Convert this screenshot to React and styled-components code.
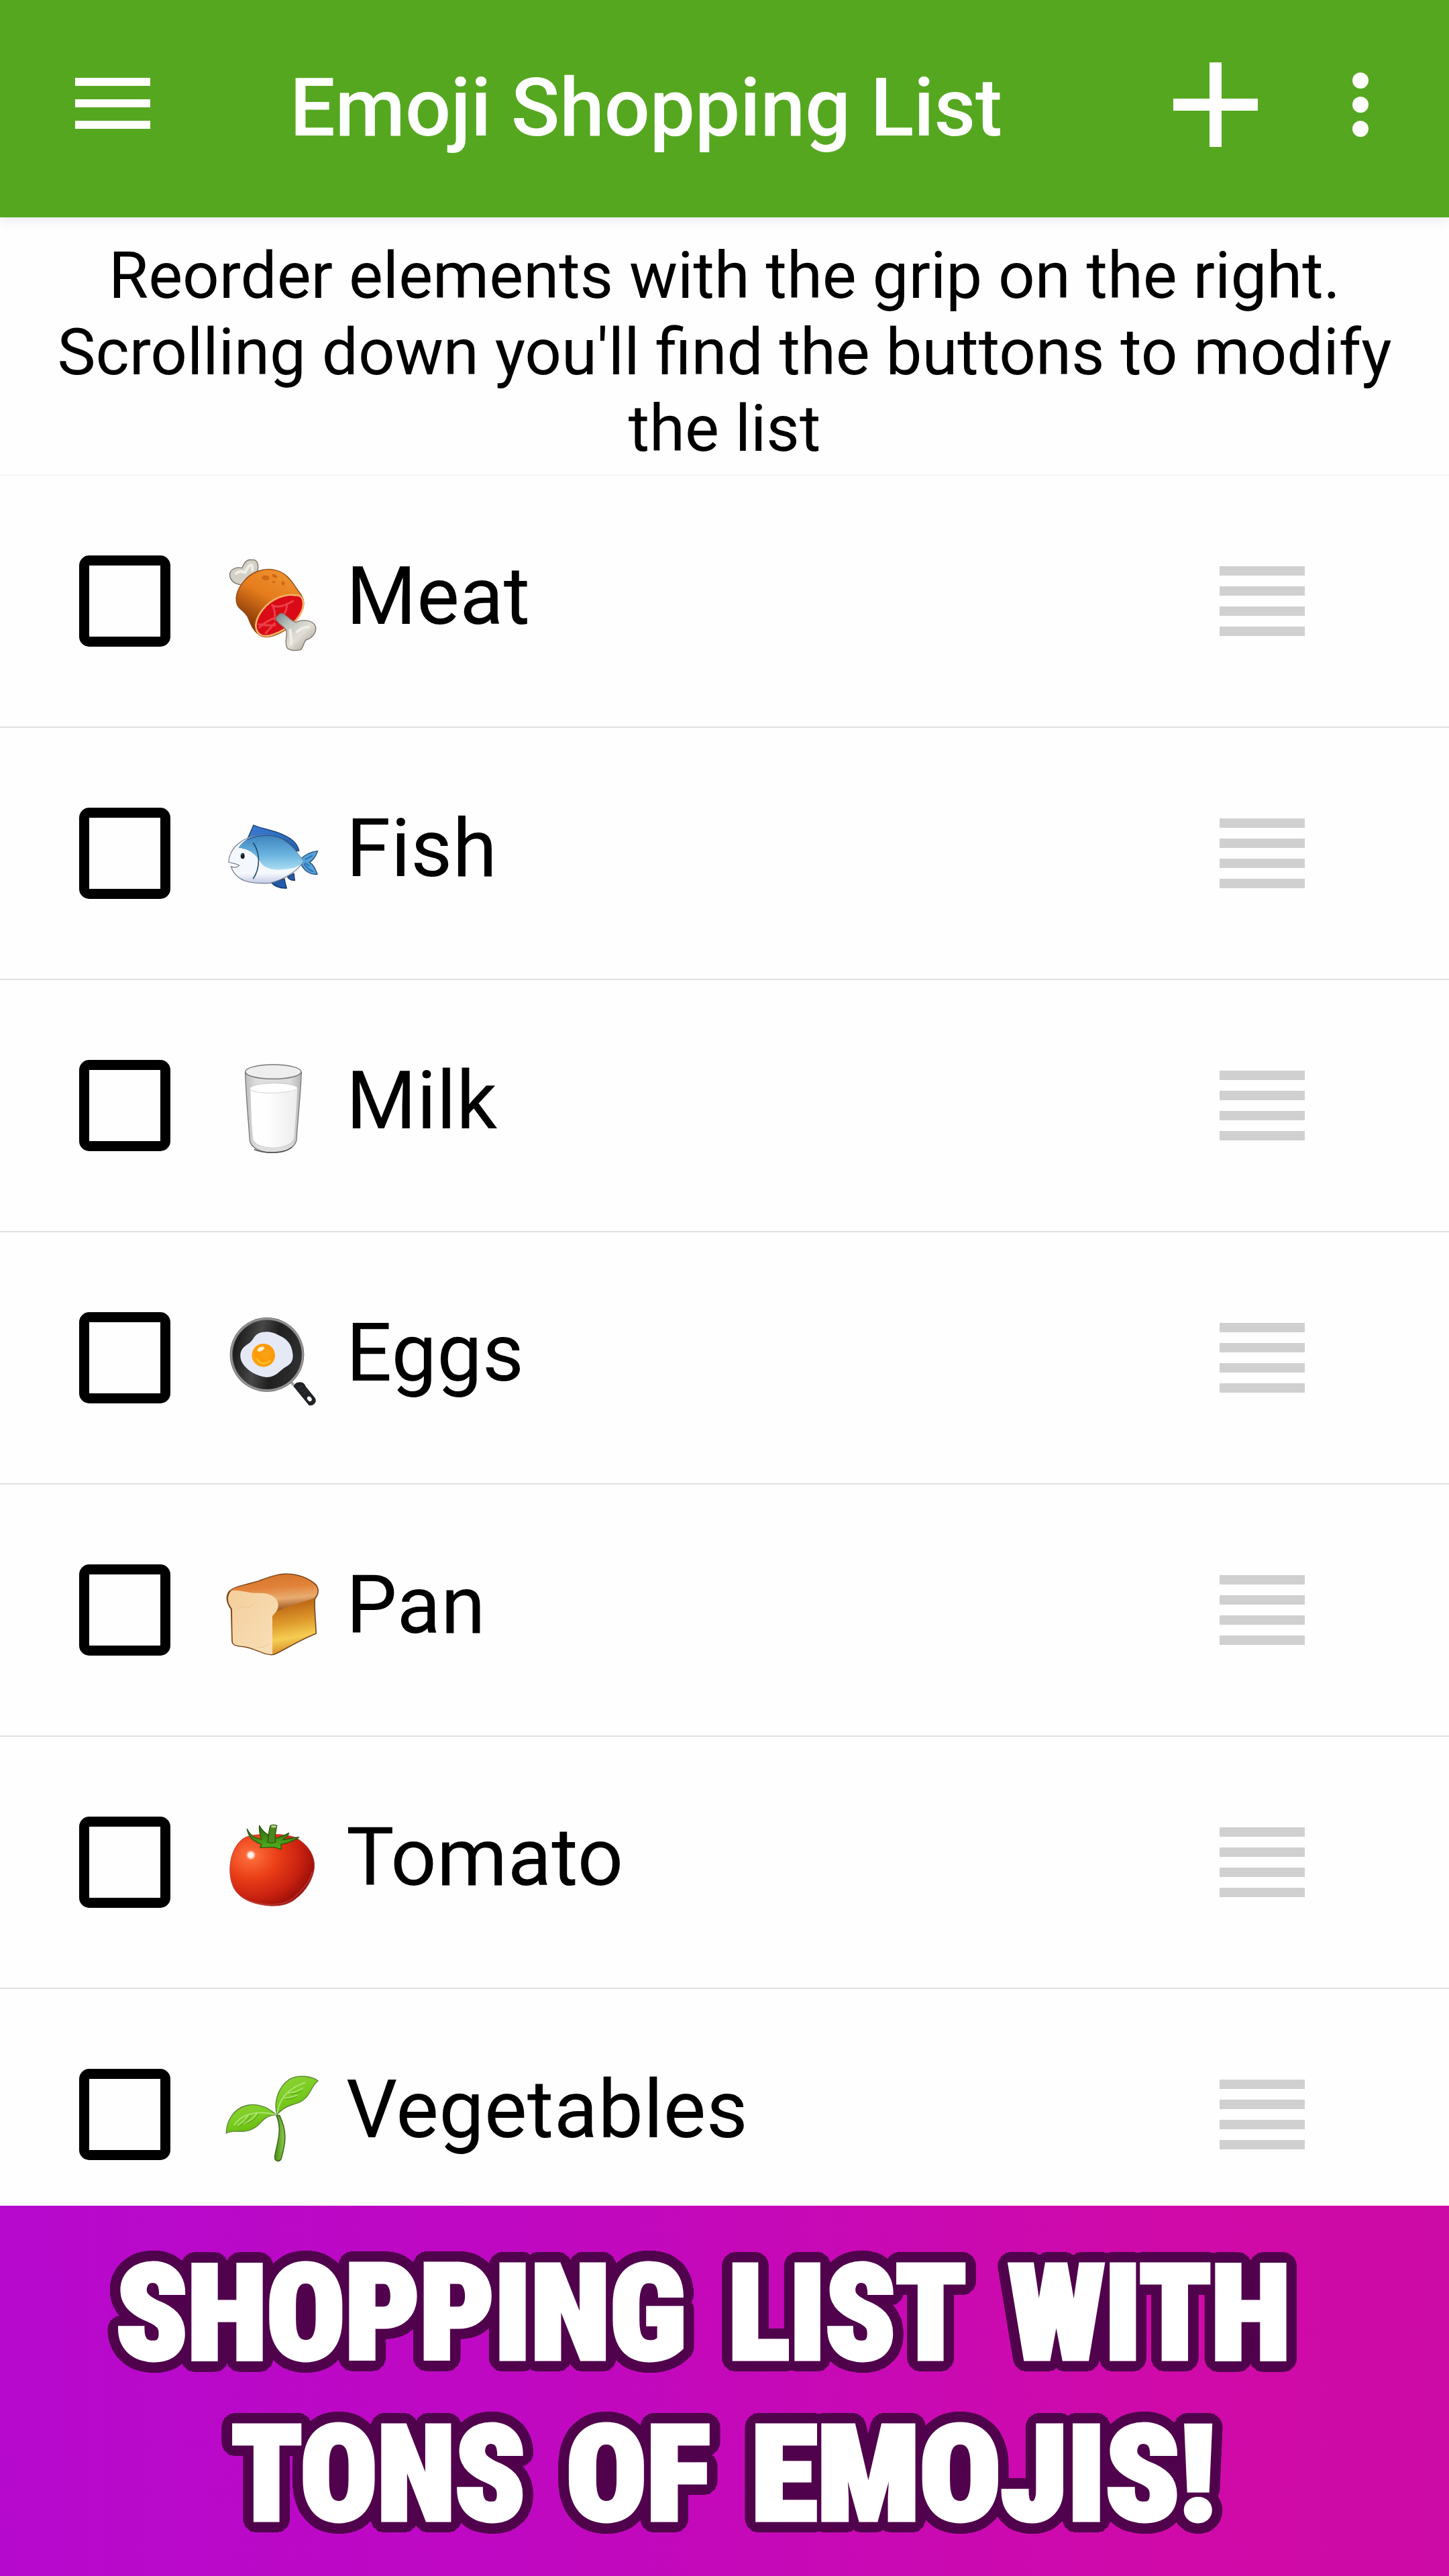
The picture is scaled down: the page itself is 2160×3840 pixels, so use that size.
import React, { useLayoutEffect, useRef, useState } from 'react'
import styled, { createGlobalStyle } from 'styled-components'

const color = {
  green: '#55a720',
  white: '#fefefe',
  black: '#000',
  divider: '#e0e0e0',
  grip: '#d0d0d0',
  outline: '#50034c'
}

const Meat = () => (
  <Emoji viewBox='0 0 540 540'>
    <defs>
      <linearGradient id='meatSkin' x1='0.7' y1='0' x2='0.2' y2='0.9'>
        <stop offset='0' stopColor='#ee922f' />
        <stop offset='.45' stopColor='#e57c1c' />
        <stop offset='.75' stopColor='#a9500f' />
        <stop offset='1' stopColor='#7c3206' />
      </linearGradient>
      <linearGradient id='meatBone' x1='0' y1='0' x2='1' y2='1'>
        <stop offset='0' stopColor='#6f8585' />
        <stop offset='.3' stopColor='#bfc3be' />
        <stop offset='.6' stopColor='#e2dfd7' />
        <stop offset='1' stopColor='#968f86' />
      </linearGradient>
    </defs>
    <path d='M138 174C116 176 75 170 68 135C64 106 92 92 122 98C130 82 138 62 158 61L178 62C204 74 192 112 187 130Z' fill='#d3d0c8' stroke='#7c7268' strokeWidth='4' />
    <path d='M96 122q16-14 40-4q14-30 26-34q10 0 6 24' fill='none' stroke='#f0eee7' strokeWidth='12' strokeLinecap='round' />
    <path d='M131 157C164 116 218 96 268 107C326 118 348 166 378 206C398 232 402 250 396 275C384 322 340 364 298 386C268 402 238 412 212 404C176 388 162 352 152 326C143 300 122 290 106 272C86 238 98 196 131 157Z' fill='url(#meatSkin)' stroke='#8f430f' strokeWidth='4' />
    <g fill='#cf6816'>
      <ellipse cx='228' cy='142' rx='17' ry='11' />
      <ellipse cx='268' cy='134' rx='13' ry='7' transform='rotate(30 268 134)' />
      <ellipse cx='264' cy='160' rx='8' ry='5' />
      <ellipse cx='306' cy='166' rx='7' ry='9' />
    </g>
    <path d='M358 220C398 216 404 256 388 294C366 344 302 386 244 401C206 408 184 388 184 354C188 306 232 252 286 230C314 220 340 216 358 220Z' fill='#d90b17' stroke='#f5b266' strokeWidth='8' />
    <path d='M256 264q30 20 94-18M262 274q8 16 8 56M324 258q-2 36-18 52M200 364q40-36 72-42M196 350q40 6 74 4M228 390l40-44' fill='none' stroke='#ea3f49' strokeWidth='9' strokeLinecap='round' />
    <path d='M300 301C318 304 334 330 363 342C380 330 426 326 446 350C464 376 440 412 408 420C396 434 398 452 384 464C366 468 344 470 326 458C308 430 328 400 320 376C306 356 280 346 274 326C280 308 288 302 300 301Z' fill='url(#meatBone)' stroke='#80766c' strokeWidth='4' />
    <path d='M338 376q6 46 4 62M368 384q30-26 52-22' fill='none' stroke='#f0eee6' strokeWidth='12' strokeLinecap='round' />
  </Emoji>
)

const Fish = () => (
  <Emoji viewBox='0 -30 540 540'>
    <defs>
      <linearGradient id='fishBack' x1='0' y1='0' x2='0' y2='1'>
        <stop offset='0' stopColor='#3c83bd' />
        <stop offset='.55' stopColor='#68b2df' />
        <stop offset='1' stopColor='#a9ddf2' />
      </linearGradient>
      <linearGradient id='fishFin' x1='0' y1='0' x2='1' y2='0'>
        <stop offset='0' stopColor='#3c78d0' />
        <stop offset='1' stopColor='#2469b5' />
      </linearGradient>
      <linearGradient id='fishBelly' x1='0' y1='0' x2='0' y2='1'>
        <stop offset='0' stopColor='#f5f9fd' />
        <stop offset='.8' stopColor='#f4f8fc' />
        <stop offset='1' stopColor='#c4cbe4' />
      </linearGradient>
    </defs>
    <path d='M145 155L174 90C210 106 262 113 300 130C340 148 368 166 377 204L350 210Z' fill='url(#fishFin)' stroke='#173d72' strokeWidth='4' />
    <path d='M252 345C266 362 286 374 322 372Q316 352 312 330ZM326 322Q336 338 358 337Q356 322 354 306Z' fill='#235ba9' stroke='#173763' strokeWidth='4' />
    <path d='M386 240C400 228 418 212 460 206C454 230 436 250 424 256C444 268 450 288 459 309C430 314 404 296 390 272Z' fill='#55a3da' stroke='#234a7c' strokeWidth='4' />
    <path d='M404 244l34-18M402 258q16 10 24 16M400 264q20 28 42 34' stroke='#245c9a' strokeWidth='4' fill='none' />
    <path d='M62 255C66 196 122 140 202 135C290 126 354 186 397 252C376 288 322 330 250 349C160 354 96 344 73 275Q96 284 110 271C102 262 88 264 62 255Z' fill='url(#fishBelly)' stroke='#6c7889' strokeWidth='3.5' />
    <path d='M106 192C126 158 164 138 202 135C290 126 354 186 397 252C390 264 372 276 350 282C300 292 248 296 212 266C186 222 158 196 106 192Z' fill='url(#fishBack)' />
    <path d='M145 155C230 118 320 136 375 208' fill='none' stroke='#28588f' strokeWidth='4' />
    <path d='M173 170C200 208 208 274 173 329' fill='none' stroke='#234c70' strokeWidth='5' strokeLinecap='round' />
    <ellipse cx='125' cy='228' rx='9' ry='13' fill='#141c26' />
    <circle cx='122' cy='222' r='3' fill='#6b7684' />
  </Emoji>
)

const Milk = () => (
  <Emoji viewBox='0 18 540 540'>
    <defs>
      <linearGradient id='milkGlass' x1='0' y1='0' x2='1' y2='0'>
        <stop offset='0' stopColor='#bdbdbd' />
        <stop offset='.2' stopColor='#dedede' />
        <stop offset='.8' stopColor='#dcdcdc' />
        <stop offset='1' stopColor='#b5b5b5' />
      </linearGradient>
      <linearGradient id='milkFill' x1='0' y1='0' x2='1' y2='0'>
        <stop offset='0' stopColor='#fff' />
        <stop offset='.4' stopColor='#fdfdfd' />
        <stop offset='1' stopColor='#ececec' />
      </linearGradient>
    </defs>
    <path d='M137 116C140 220 150 320 157 420C164 456 208 475 262 475C320 475 360 450 366 418C372 310 384 220 388 116Z' fill='url(#milkGlass)' stroke='#777' strokeWidth='4' />
    <ellipse cx='262' cy='113' rx='125' ry='32' fill='#eee' stroke='#777' strokeWidth='4.5' />
    <path d='M160 190C164 280 164 360 174 420C190 446 220 456 262 456C310 456 344 440 354 412C362 330 366 260 370 185Z' fill='url(#milkFill)' />
    <ellipse cx='264' cy='187' rx='106' ry='21' fill='#fff' />
    <path d='M158 187C172 158 320 158 360 174M158 192C170 212 310 216 370 190' fill='none' stroke='#c9c9c9' strokeWidth='2.5' />
    <path d='M174 424C200 462 322 466 352 420' fill='none' stroke='#bbb' strokeWidth='2.5' />
    <path d='M176 460C220 480 312 480 346 450' fill='none' stroke='#484848' strokeWidth='4' />
  </Emoji>
)

const Eggs = () => (
  <Emoji viewBox='0 6 540 540'>
    <defs>
      <linearGradient id='panInside' x1='0' y1='.4' x2='1' y2='.6'>
        <stop offset='0' stopColor='#191919' />
        <stop offset='.35' stopColor='#474747' />
        <stop offset='.6' stopColor='#202020' />
        <stop offset='1' stopColor='#303030' />
      </linearGradient>
      <radialGradient id='yolk' cx='.6' cy='.45' r='.6'>
        <stop offset='0' stopColor='#f6a51e' />
        <stop offset='.65' stopColor='#ff9800' />
        <stop offset='1' stopColor='#f8a51b' />
      </radialGradient>
    </defs>
    <path d='M342 362L362 382' stroke='#a5a5a5' strokeWidth='13' />
    <path d='M355 380Q362 364 378 363Q398 360 406 382L448 434C456 450 440 468 422 462Z' fill='#202225' stroke='#202225' strokeWidth='4' strokeLinejoin='round' />
    <path d='M374 392l18-16M384 406l20-18M394 418l20-18' stroke='#3c4044' strokeWidth='3' />
    <ellipse cx='424' cy='436' rx='9' ry='12' transform='rotate(-35 424 436)' fill='#fff' />
    <circle cx='234' cy='238' r='166' fill='#5a5a5a' />
    <circle cx='234' cy='238' r='160' fill='none' stroke='#969593' strokeWidth='8' />
    <circle cx='235' cy='238' r='154' fill='url(#panInside)' />
    <path d='M196 143C226 132 254 134 284 150C314 162 338 184 344 210C356 250 350 272 326 288C290 306 280 338 232 339C182 334 124 298 116 254C110 222 128 204 150 190C172 176 174 154 196 143Z' fill='#e5e9f6' />
    <circle cx='218' cy='241' r='52' fill='url(#yolk)' />
    <path d='M190 258Q210 292 248 266' fill='none' stroke='#ffbd23' strokeWidth='9' strokeLinecap='round' />
    <ellipse cx='206' cy='213' rx='17' ry='9' transform='rotate(-28 206 213)' fill='#fff1cc' />
  </Emoji>
)

const Bread = () => (
  <Emoji viewBox='0 -6 540 540'>
    <defs>
      <linearGradient id='crustSide' x1='.4' y1='0' x2='.6' y2='1'>
        <stop offset='0' stopColor='#8d3d0b' />
        <stop offset='.4' stopColor='#bd6614' />
        <stop offset='.62' stopColor='#dc972a' />
        <stop offset='.82' stopColor='#f5cd52' />
        <stop offset='1' stopColor='#d48a26' />
      </linearGradient>
      <linearGradient id='crustTop' x1='.4' y1='0' x2='.6' y2='1'>
        <stop offset='0' stopColor='#d4772a' />
        <stop offset='.35' stopColor='#e28239' />
        <stop offset='.65' stopColor='#e9ac70' />
        <stop offset='1' stopColor='#8d460e' />
      </linearGradient>
      <linearGradient id='crumb' x1='0' y1='0' x2='1' y2='1'>
        <stop offset='0' stopColor='#f3cf9c' />
        <stop offset='1' stopColor='#f9dfb9' />
      </linearGradient>
    </defs>
    <path d='M68 154C90 134 130 130 170 118C220 106 250 84 310 79C370 76 420 98 452 126C470 150 464 170 448 190C444 240 454 300 453 346C380 374 310 420 268 438C230 448 180 410 130 404C96 400 80 398 78 380L74 236C50 204 50 174 68 154Z' fill='url(#crustSide)' stroke='#79461f' strokeWidth='5' />
    <path d='M70 154C90 136 130 132 170 120C220 108 250 86 310 81C370 78 420 100 450 128C468 150 460 168 446 186C400 206 340 214 270 250L240 180Z' fill='url(#crustTop)' />
    <path d='M74 154C110 146 150 168 206 164C260 166 286 190 284 222C282 248 266 254 258 268L258 438C220 440 180 408 130 402C96 398 82 396 81 380L78 234C54 206 56 174 74 154Z' fill='url(#crumb)' />
    <path d='M104 236q20-18 32-8q16 4 36-12M190 408q30 4 52-18' fill='none' stroke='#eec48e' strokeWidth='3' />
  </Emoji>
)

const Tomato = () => (
  <Emoji viewBox='0 -18 540 540'>
    <defs>
      <radialGradient id='tomatoSkin' cx='.25' cy='.3' r='.85'>
        <stop offset='0' stopColor='#ff743f' />
        <stop offset='.38' stopColor='#e93d16' />
        <stop offset='.7' stopColor='#c82110' />
        <stop offset='1' stopColor='#870806' />
      </radialGradient>
      <radialGradient id='tomatoShine'>
        <stop offset='0' stopColor='#fff' />
        <stop offset='.5' stopColor='#ffe9df' />
        <stop offset='1' stopColor='#ff774c' stopOpacity='0' />
      </radialGradient>
      <linearGradient id='tomatoLeaf' x1='0' y1='0' x2='0' y2='1'>
        <stop offset='0' stopColor='#2f650c' />
        <stop offset='1' stopColor='#50b41d' />
      </linearGradient>
    </defs>
    <path d='M150 112C200 98 330 98 370 122C400 142 444 178 446 240C446 300 404 360 366 388C330 422 270 430 210 418C150 408 98 380 80 330C62 284 66 220 84 180C98 148 120 120 150 112Z' fill='url(#tomatoSkin)' stroke='#b84442' strokeWidth='3' />
    <path d='M120 382C180 424 300 430 350 390C388 356 424 320 436 270' fill='none' stroke='#c84a47' strokeWidth='5' opacity='.6' />
    <circle cx='162' cy='196' r='25' fill='url(#tomatoShine)' />
    <path d='M145 79C158 110 182 120 210 126C202 106 198 84 200 64C212 88 226 98 242 108L272 122C296 116 314 108 332 97C328 112 314 120 304 128C330 124 352 118 377 116C354 132 326 144 296 148L298 170L264 160L204 163L210 148C176 136 150 116 145 79Z' fill='url(#tomatoLeaf)' stroke='#2c560d' strokeWidth='4' strokeLinejoin='round' />
    <path d='M236 138C244 114 240 84 250 64Q262 58 278 64C274 90 266 112 272 138Q254 146 236 138Z' fill='#4b871d' stroke='#2c560d' strokeWidth='4' />
    <ellipse cx='264' cy='68' rx='12' ry='5' fill='#bcd693' />
  </Emoji>
)

const Sprout = () => (
  <Emoji viewBox='0 0 540 540'>
    <defs>
      <linearGradient id='leaf' x1='0' y1='0' x2='.5' y2='1'>
        <stop offset='0' stopColor='#8fd136' />
        <stop offset='.5' stopColor='#7dcf24' />
        <stop offset='1' stopColor='#66b80c' />
      </linearGradient>
      <linearGradient id='stem' x1='0' y1='0' x2='1' y2='0'>
        <stop offset='0' stopColor='#488b16' />
        <stop offset='1' stopColor='#8bcf4a' />
      </linearGradient>
    </defs>
    <path d='M276 250C306 320 276 380 269 434Q268 454 282 454Q296 454 299 438C318 370 324 320 290 250Z' fill='url(#stem)' stroke='#436a20' strokeWidth='5' />
    <path d='M276 247C236 212 196 196 150 204C80 218 52 280 52 330C70 318 92 322 120 322C156 322 184 308 208 280C230 256 248 250 276 247Z' fill='url(#leaf)' stroke='#5b8437' strokeWidth='4' />
    <path d='M278 247C262 180 290 120 332 90C370 66 436 74 462 96C440 112 436 132 420 156C398 188 374 196 342 204C318 212 300 222 278 247Z' fill='url(#leaf)' stroke='#5b8437' strokeWidth='4' />
    <path d='M276 246C200 230 130 234 88 292M150 250q-22 30-46 44M190 240q-26 36-60 46' fill='none' stroke='#b2e57a' strokeWidth='5' strokeLinecap='round' />
    <path d='M280 240C288 180 324 130 404 104M330 150q34-2 64-22M312 172q26 0 56-12' fill='none' stroke='#b2e57a' strokeWidth='5' strokeLinecap='round' />
    <path d='M160 250q-20 34-50 46M196 244q-20 34-56 42M338 154q34 0 52-14M318 178q26 2 48-12' fill='none' stroke='#559b18' strokeWidth='3' strokeLinecap='round' />
  </Emoji>
)

const items = [
  { name: 'Meat', icon: Meat },
  { name: 'Fish', icon: Fish },
  { name: 'Milk', icon: Milk },
  { name: 'Eggs', icon: Eggs },
  { name: 'Pan', icon: Bread },
  { name: 'Tomato', icon: Tomato },
  { name: 'Vegetables', icon: Sprout }
]

// ring of hard shadows, widened on x to undo the squeeze of the word
const outline = (radius, scale) =>
  Array.from({ length: 48 }, (_, i) => {
    const a = (i / 48) * Math.PI * 2
    const x = ((Math.cos(a) * radius) / scale).toFixed(1)
    const y = (Math.sin(a) * radius).toFixed(1)
    return `${x}px ${y}px 0 ${color.outline}`
  }).join(', ')

// squeezes its text so that it fills exactly the given width
const FitWord = ({ width, children }) => {
  const ref = useRef(null)
  const [scale, setScale] = useState(0.7)

  useLayoutEffect(() => {
    setScale(width / ref.current.offsetWidth)
  }, [width])

  return (
    <WordBox width={width}>
      <Word
        ref={ref}
        style={{
          transform: `scaleX(${scale})`,
          textShadow: outline(19, scale)
        }}
      >
        {children}
      </Word>
    </WordBox>
  )
}

export default () => (
  <Screen>
    <GlobalStyle />
    <Header>
      <Menu>
        <Bar />
        <Bar />
        <Bar />
      </Menu>
      <Title>Emoji Shopping List</Title>
      <Plus viewBox='0 0 126 126'>
        <path d='M54 0h18v54h54v18H72v54H54V72H0V54h54z' />
      </Plus>
      <More>
        <Dot />
        <Dot />
        <Dot />
      </More>
    </Header>
    <Intro>
      Reorder elements with the grip on the right. Scrolling down you'll find
      the buttons to modify the list
    </Intro>
    <List>
      {items.map(({ name, icon: Icon }) => (
        <Row key={name}>
          <Checkbox />
          <Icon />
          <Name>{name}</Name>
          <Grip>
            <GripLine />
            <GripLine />
            <GripLine />
            <GripLine />
          </Grip>
        </Row>
      ))}
    </List>
    <Banner>
      <Line indent={173} gap={63}>
        <FitWord width={850}>SHOPPING</FitWord>
        <FitWord width={354}>LIST</FitWord>
        <FitWord width={420}>WITH</FitWord>
      </Line>
      <Line indent={345} gap={61}>
        <FitWord width={438}>TONS</FitWord>
        <FitWord width={215}>OF</FitWord>
        <FitWord width={692}>EMOJIS!</FitWord>
      </Line>
    </Banner>
  </Screen>
)

const GlobalStyle = createGlobalStyle`
  * {
    box-sizing: border-box;
  }

  body {
    margin: 0;
    background: ${color.white};
  }
`
const Screen = styled.div`
  display: flex;
  flex-direction: column;
  width: 2160px;
  height: 3840px;
  overflow: hidden;
  color: ${color.black};
  background: ${color.white};
  font-family: Roboto, 'Liberation Sans', sans-serif;
`
const Header = styled.header`
  display: flex;
  align-items: center;
  flex: none;
  height: 324px;
  padding: 0 120px 12px 112px;
  background: ${color.green};
  box-shadow: 0 4px 18px rgba(30, 0, 60, 0.1);
`
const Menu = styled.div`
  display: flex;
  flex-direction: column;
  gap: 20px;
  width: 112px;
  margin-top: -4px;
`
const Bar = styled.div`
  height: 12px;
  background: #fff;
`
const Title = styled.h1`
  flex: 1;
  margin: 10px 0 0;
  padding-left: 208px;
  color: #fff;
  font-size: 120px;
  font-weight: 500;
  line-height: 140px;
  letter-spacing: -0.2px;
  white-space: nowrap;
`
const Plus = styled.svg`
  width: 126px;
  height: 126px;
  margin-right: 141px;
  fill: #fff;
`
const More = styled.div`
  display: flex;
  flex-direction: column;
  gap: 12px;
`
const Dot = styled.div`
  width: 24px;
  height: 24px;
  border-radius: 50%;
  background: #fff;
`
const Intro = styled.p`
  flex: none;
  height: 385px;
  margin: 0;
  padding: 30px 70px 0;
  border-bottom: 2px solid #f4f4f4;
  font-size: 96px;
  line-height: 114px;
  text-align: center;
`
const List = styled.div`
  flex: none;
  height: 2579px;
  overflow: hidden;
`
const Row = styled.div`
  display: flex;
  align-items: center;
  height: 376px;
  padding: 0 215px 0 118px;
  border-bottom: 2px solid ${color.divider};
`
const Checkbox = styled.div`
  width: 136px;
  height: 136px;
  margin-right: 66px;
  border: 15px solid ${color.black};
  border-radius: 15px;
`
const Emoji = styled.svg`
  width: 180px;
  height: 180px;
  margin-top: 16px;
`
const Name = styled.div`
  flex: 1;
  padding: 0 0 14px 16px;
  font-size: 120px;
  letter-spacing: 0.4px;
`
const Grip = styled.div`
  display: flex;
  flex-direction: column;
  gap: 16px;
  width: 127px;
`
const GripLine = styled.div`
  height: 14px;
  background: ${color.grip};
`
const Banner = styled.footer`
  flex: none;
  height: 552px;
  padding-top: 41px;
  background: linear-gradient(
    89deg,
    #b609ce,
    #bf08c2 35%,
    #d00aa8 82%,
    #cc0aa5
  );
`
const Line = styled.div`
  display: flex;
  gap: ${props => props.gap}px;
  padding-left: ${props => props.indent}px;
`
const WordBox = styled.div`
  width: ${props => props.width}px;
  height: 240px;
`
const Word = styled.span`
  display: inline-block;
  color: #fff;
  font-size: 197px;
  font-weight: 900;
  font-stretch: 75%;
  line-height: 240px;
  letter-spacing: 0;
  white-space: nowrap;
  transform-origin: 0 50%;
  -webkit-text-stroke: 7px #fff;
`
